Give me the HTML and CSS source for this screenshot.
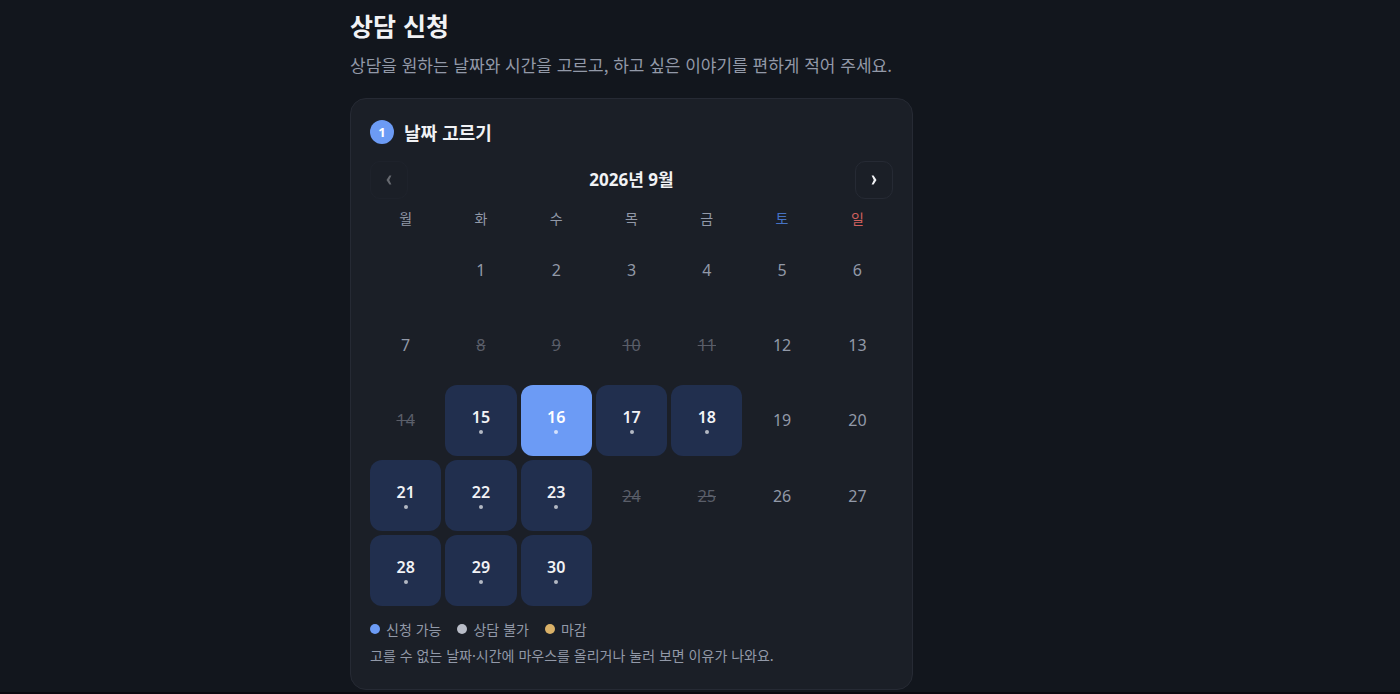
FILE: index.html
```html
<!DOCTYPE html>
<html lang="ko">
<head>
  <meta charset="UTF-8" />
  <meta name="viewport" content="width=device-width, initial-scale=1" />
  <title>상담 신청</title>
  <link rel="stylesheet" href="styles.css">
</head>
<body>
  <main class="page">
    <h1>상담 신청</h1>
    <p class="lead">상담을 원하는 날짜와 시간을 고르고, 하고 싶은 이야기를 편하게 적어 주세요.</p>

    <section class="card">
      <h2><span class="step">1</span>날짜 고르기</h2>

      <div class="cal-nav">
        <button type="button" class="nav-btn" aria-label="이전 달" disabled>
          <svg width="6" height="10" viewBox="0 0 6 10"><path d="M3.4 0.4H5.4L3.2 5L5.4 9.6H3.4L0.5 5Z" fill="currentColor"/></svg>
        </button>
        <strong class="cal-title">2026년 9월</strong>
        <button type="button" class="nav-btn" aria-label="다음 달">
          <svg width="6" height="10" viewBox="0 0 6 10"><path d="M2.6 0.4H0.6L2.8 5L0.6 9.6H2.6L5.5 5Z" fill="currentColor"/></svg>
        </button>
      </div>

      <div class="cal-grid dow">
        <span>월</span>
        <span>화</span>
        <span>수</span>
        <span>목</span>
        <span>금</span>
        <span class="sat">토</span>
        <span class="sun">일</span>
      </div>

      <div class="cal-grid">
        <span class="blank"></span>
        <button type="button" class="day">1</button>
        <button type="button" class="day">2</button>
        <button type="button" class="day">3</button>
        <button type="button" class="day">4</button>
        <button type="button" class="day">5</button>
        <button type="button" class="day">6</button>

        <button type="button" class="day">7</button>
        <button type="button" class="day past">8</button>
        <button type="button" class="day past">9</button>
        <button type="button" class="day past">10</button>
        <button type="button" class="day past">11</button>
        <button type="button" class="day">12</button>
        <button type="button" class="day">13</button>

        <button type="button" class="day past">14</button>
        <button type="button" class="day open">15</button>
        <button type="button" class="day open selected" aria-pressed="true">16</button>
        <button type="button" class="day open">17</button>
        <button type="button" class="day open">18</button>
        <button type="button" class="day">19</button>
        <button type="button" class="day">20</button>

        <button type="button" class="day open">21</button>
        <button type="button" class="day open">22</button>
        <button type="button" class="day open">23</button>
        <button type="button" class="day past">24</button>
        <button type="button" class="day past">25</button>
        <button type="button" class="day">26</button>
        <button type="button" class="day">27</button>

        <button type="button" class="day open">28</button>
        <button type="button" class="day open">29</button>
        <button type="button" class="day open">30</button>
      </div>

      <ul class="legend">
        <li><i class="dot dot-open"></i>신청 가능</li>
        <li><i class="dot dot-off"></i>상담 불가</li>
        <li><i class="dot dot-full"></i>마감</li>
      </ul>
      <p class="hint">고를 수 없는 날짜·시간에 마우스를 올리거나 눌러 보면 이유가 나와요.</p>
    </section>
  </main>
</body>
</html>
```
FILE: styles.css
```css
:root {
  --bg: #12161d;
  --card: #1b1f27;
  --line: #262a34;
  --text: #f1f2f5;
  --muted: #9299a8;
  --faint: #5a5e69;
  --accent: #6c9bf5;
  --accent-soft: #212f4e;
}

* {
  box-sizing: border-box;
}

body {
  margin: 0;
  min-height: 100vh;
  background: var(--bg);
  border-bottom: 2px solid #0a0910;
  color: var(--text);
  font-family: "Noto Sans CJK KR", sans-serif;
  font-size: 16px;
}

.page {
  max-width: 700px;
  margin: 0 auto;
  padding: 8px 0 2px;
}

h1 {
  margin: 0;
  font-size: 25px;
  line-height: 34px;
}

.lead {
  margin: 10px 0 20px;
  color: var(--muted);
  font-size: 17px;
  line-height: 26px;
}

.card {
  max-width: 563px;
  padding: 21px 19px 24px;
  background: var(--card);
  border: 1px solid var(--line);
  border-radius: 16px;
}

h2 {
  display: flex;
  align-items: center;
  gap: 10px;
  margin: 0 0 17px;
  font-size: 18px;
  line-height: 24px;
}

.step {
  width: 24px;
  height: 24px;
  border-radius: 50%;
  background: var(--accent);
  color: #fff;
  font-family: "Noto Sans", sans-serif;
  font-size: 13px;
  text-align: center;
}

.cal-nav {
  display: flex;
  align-items: center;
  justify-content: space-between;
  margin-bottom: 9px;
}

.cal-title {
  font-family: "Noto Sans", "Noto Sans CJK KR", sans-serif;
  font-size: 17px;
  line-height: 24px;
}

.nav-btn {
  display: flex;
  align-items: center;
  justify-content: center;
  width: 38px;
  height: 38px;
  padding: 0;
  background: transparent;
  border: 1px solid var(--line);
  border-radius: 10px;
  color: var(--text);
}

.nav-btn:disabled {
  opacity: 0.35;
}

.cal-grid {
  display: grid;
  grid-template-columns: repeat(7, 1fr);
  gap: 4px;
}

.dow {
  margin-bottom: 6px;
  color: var(--muted);
  font-size: 14px;
  line-height: 20px;
  text-align: center;
}

.dow .sat {
  color: #4672c4;
}

.dow .sun {
  color: #d0605e;
}

.day {
  display: flex;
  flex-direction: column;
  align-items: center;
  justify-content: center;
  gap: 3px;
  aspect-ratio: 1;
  padding: 0;
  background: transparent;
  border: 0;
  border-radius: 12px;
  color: var(--muted);
  font-family: "Noto Sans", sans-serif;
  font-size: 16px;
  line-height: 20px;
}

.day.past {
  color: var(--faint);
  text-decoration: line-through;
}

.day.open {
  background: var(--accent-soft);
  color: var(--text);
  font-weight: 600;
  cursor: pointer;
}

.day.open::after {
  content: "";
  width: 4px;
  height: 4px;
  border-radius: 50%;
  background: currentColor;
  opacity: 0.7;
}

.day.selected {
  background: var(--accent);
  color: #fff;
}

.legend {
  display: flex;
  flex-wrap: wrap;
  gap: 16px;
  margin: 13px 0 6px;
  padding: 0;
  color: var(--muted);
  font-size: 14px;
  line-height: 20px;
  list-style: none;
}

.legend li {
  display: flex;
  align-items: center;
  gap: 6px;
}

.dot {
  width: 10px;
  height: 10px;
  border-radius: 50%;
}

.dot-open {
  background: var(--accent);
}

.dot-off {
  background: #b9bdc8;
}

.dot-full {
  background: #dab168;
}

.hint {
  margin: 0;
  color: var(--muted);
  font-size: 14px;
  line-height: 20px;
}
```
